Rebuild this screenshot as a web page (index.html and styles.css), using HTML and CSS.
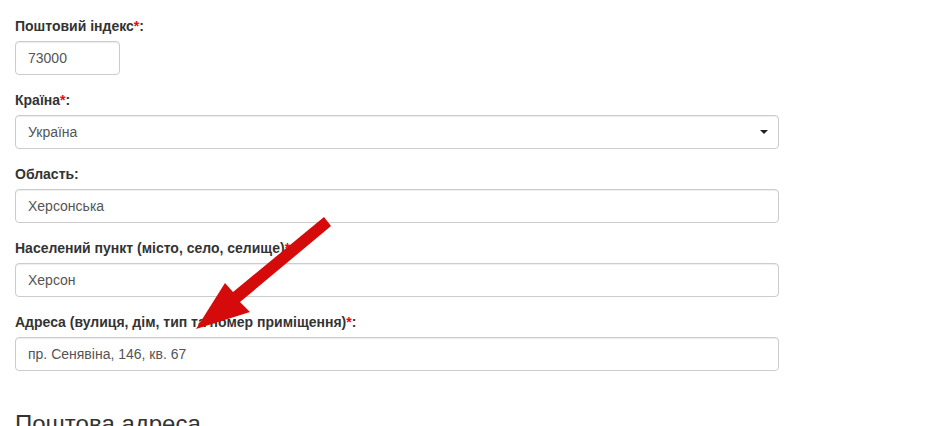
FILE: index.html
```html
<!DOCTYPE html>
<html lang="uk">
<head>
  <meta charset="UTF-8">
  <meta name="viewport" content="width=device-width, initial-scale=1.0">
  <title>Адреса</title>
  <link rel="stylesheet" href="styles.css">
</head>
<body>
  <div class="container">
    <form class="address-form">
      <div class="form-group">
        <label for="zip">Поштовий індекс<span class="req">*</span>:</label>
        <input type="text" id="zip" class="form-control input-zip" value="73000">
      </div>

      <div class="form-group">
        <label for="country">Країна<span class="req">*</span>:</label>
        <div class="select-wrap">
          <select id="country" class="form-control">
            <option>Україна</option>
          </select>
          <span class="caret"></span>
        </div>
      </div>

      <div class="form-group">
        <label for="region">Область:</label>
        <input type="text" id="region" class="form-control" value="Херсонська">
      </div>

      <div class="form-group">
        <label for="city">Населений пункт (місто, село, селище)<span class="req">*</span>:</label>
        <input type="text" id="city" class="form-control" value="Херсон">
      </div>

      <div class="form-group">
        <label for="street">Адреса (вулиця, дім, тип та номер приміщення)<span class="req">*</span>:</label>
        <input type="text" id="street" class="form-control" value="пр. Сенявіна, 146, кв. 67">
      </div>

      <h3 class="section-title">Поштова адреса</h3>
    </form>
  </div>

  <!-- annotation arrow drawn over the form -->
  <svg class="annotation" width="925" height="426" viewBox="0 0 925 426">
    <polygon fill="#d50a0a" points="196,329 225,283 233,292 324,217 331,226 240,302 250,312"/>
  </svg>
</body>
</html>
```

FILE: styles.css
```css
body {
  font-family: "Liberation Sans", Arial, Helvetica, sans-serif;
  font-size: 14px;
  line-height: 20px;
  color: #333;
  background-color: #fff;
  margin: 0;
}
.container {
  width: 764px;
  padding: 16px 15px 0;
}
.form-group {
  margin-bottom: 15px;
}
label {
  display: block;
  margin-bottom: 5px;
  font-weight: bold;
}
.req {
  color: #f00;
}
.form-control {
  display: block;
  width: 100%;
  height: 34px;
  padding: 6px 12px;
  box-sizing: border-box;
  font-family: inherit;
  font-size: 14px;
  line-height: 20px;
  color: #555;
  background-color: #fff;
  border: 1px solid #ccc;
  border-radius: 4px;
  box-shadow: inset 0 1px 1px rgba(0,0,0,0.075);
  margin: 0;
}
.input-zip {
  width: 105px;
}
.select-wrap {
  position: relative;
}
select.form-control {
  -webkit-appearance: none;
  appearance: none;
}
.caret {
  position: absolute;
  right: 11px;
  top: 15px;
  width: 0;
  height: 0;
  border-top: 4px solid #222;
  border-left: 4px solid transparent;
  border-right: 4px solid transparent;
}
.section-title {
  margin: 40px 0 10px;
  font-size: 24px;
  font-weight: 500;
  line-height: 1.1;
}
.annotation {
  position: absolute;
  top: 0;
  left: 0;
  pointer-events: none;
}
```
